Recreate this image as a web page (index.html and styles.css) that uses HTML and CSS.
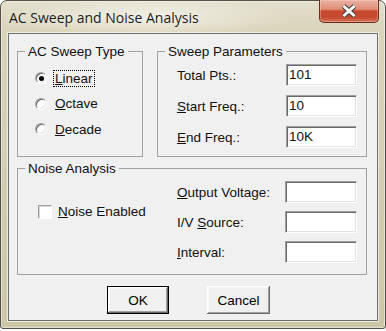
FILE: index.html
```html
<!DOCTYPE html>
<html lang="en">
<head>
	<meta charset="utf-8">
	<title>AC Sweep and Noise Analysis</title>
	<link rel="stylesheet" href="styles.css">
</head>
<body>

	<div class="window">

		<div class="titlebar">
			<span class="title">AC Sweep and Noise Analysis</span>
			<button class="close-btn" type="button">
				<svg width="16" height="14" viewBox="0 0 16 14">
					<path d="M2.5 2 L13.5 12 M13.5 2 L2.5 12" stroke="#3a3a3a" stroke-width="5" />
					<path d="M2.5 2 L13.5 12 M13.5 2 L2.5 12" stroke="#fff" stroke-width="3" />
				</svg>
			</button>
		</div>

		<form class="client" action="" onsubmit="return false">

			<div class="top-row">

				<fieldset class="group sweep-type">
					<legend>AC Sweep Type</legend>
					<div class="group-body radio-list">
						<label class="radio-row"><span class="radio checked"></span><span class="caption focused"><u>L</u>inear</span></label>
						<label class="radio-row"><span class="radio"></span><span class="caption"><u>O</u>ctave</span></label>
						<label class="radio-row"><span class="radio"></span><span class="caption"><u>D</u>ecade</span></label>
					</div>
				</fieldset>

				<fieldset class="group sweep-params">
					<legend>Sweep Parameters</legend>
					<div class="group-body field-list">
						<div class="field-row"><span>Total Pts.:</span><span class="textbox">101</span></div>
						<div class="field-row"><span><u>S</u>tart Freq.:</span><span class="textbox">10</span></div>
						<div class="field-row"><span><u>E</u>nd Freq.:</span><span class="textbox">10K</span></div>
					</div>
				</fieldset>

			</div>

			<fieldset class="group noise">
				<legend>Noise Analysis</legend>
				<div class="group-body noise-body">
					<label class="check-row"><span class="checkbox"></span><span><u>N</u>oise Enabled</span></label>
					<div class="field-list noise-fields">
						<div class="field-row"><span><u>O</u>utput Voltage:</span><span class="textbox wide"></span></div>
						<div class="field-row"><span>I/V <u>S</u>ource:</span><span class="textbox wide"></span></div>
						<div class="field-row"><span><u>I</u>nterval:</span><span class="textbox wide"></span></div>
					</div>
				</div>
			</fieldset>

			<div class="buttons">
				<button class="btn default" type="submit">OK</button>
				<button class="btn cancel" type="button">Cancel</button>
			</div>

		</form>

	</div>

</body>
</html>
```

FILE: styles.css
```css
html,body {
	margin:0;
	padding:0;
	}
body {
	background-color:#fff;
	font-family:"Liberation Sans",Arial,sans-serif;
	font-size:13.5px;
	color:#111;
	}
u {
	text-decoration-thickness:1px;
	text-underline-offset:1px;
	}

/* window frame */
.window {
	box-sizing:border-box;
	width:386px;
	height:329px;
	display:flex;
	flex-direction:column;
	border:1px solid #545048;
	border-radius:7px 7px 3px 3px;
	background:
		radial-gradient(ellipse 140px 22px at 150px 16px,rgba(255,255,255,0.55),rgba(255,255,255,0)),
		linear-gradient(to bottom,#e2dfcc 0,#d9d4ba 30px,#cdc7a8 100%);
	box-shadow:inset 0 0 0 1px rgba(255,255,255,0.45);
	}

.titlebar {
	height:32px;
	display:flex;
	justify-content:space-between;
	align-items:flex-start;
	}
.title {
	padding:7px 0 0 8px;
	font-family:"Open Sans","Noto Sans",sans-serif;
	font-size:14px;
	color:#1c1c1c;
	text-shadow:0 0 8px rgba(255,255,255,0.9);
	}
.close-btn {
	box-sizing:border-box;
	width:60px;
	height:23px;
	margin:-1px 6px 0 0;
	padding:0;
	display:flex;
	align-items:center;
	justify-content:center;
	border:1px solid #6e2a1d;
	border-top:none;
	border-radius:0 0 5px 5px;
	background:linear-gradient(to bottom,#eab1a3 0,#de8d77 42%,#c9482d 50%,#c44b30 78%,#d77458 100%);
	box-shadow:inset 0 0 0 1px rgba(255,220,210,0.35);
	}

/* client area */
.client {
	box-sizing:border-box;
	width:370px;
	height:288px;
	margin:0 7px;
	padding:10px 9px 0 8px;
	border:1px solid #6f6f6f;
	background-color:#f0f0f0;
	box-shadow:0 0 0 1px rgba(255,255,255,0.6);
	}

.top-row {
	display:flex;
	}

.group {
	box-sizing:border-box;
	margin:0;
	padding:0;
	border:1px solid #a0a0a0;
	min-width:0;
	}
.group legend {
	margin-left:7px;
	padding:0 3px;
	line-height:15px;
	}

.sweep-type {
	width:126px;
	height:113px;
	}
.sweep-params {
	width:210px;
	height:113px;
	margin-left:14px;
	}
.noise {
	width:350px;
	height:114px;
	margin-top:4px;
	}

/* radio buttons */
.radio-list {
	display:flex;
	flex-direction:column;
	gap:7.5px;
	padding:10px 0 0 17px;
	}
.radio-row {
	height:18px;
	display:flex;
	align-items:center;
	}
.radio {
	position:relative;
	box-sizing:border-box;
	width:12px;
	height:12px;
	margin-right:6px;
	border-radius:50%;
	border:1px solid;
	border-color:#a0a0a0 #fff #fff #a0a0a0;
	background-color:#fff;
	box-shadow:inset 1px 1px 0 #696969,inset -1px -1px 0 #e3e3e3;
	}
.radio.checked::after {
	content:"";
	position:absolute;
	left:2.5px;
	top:2.5px;
	width:5px;
	height:5px;
	border-radius:50%;
	background-color:#000;
	}
.caption {
	padding:0 1px;
	border:1px solid transparent;
	line-height:15px;
	}
.caption.focused {
	border:1px dotted #000;
	}

/* text fields */
.field-list {
	display:flex;
	flex-direction:column;
	}
.sweep-params .field-list {
	gap:9px;
	padding:5px 9px 0 19px;
	}
.field-row {
	height:22px;
	display:flex;
	align-items:center;
	justify-content:space-between;
	}
.textbox {
	box-sizing:border-box;
	width:71px;
	height:22px;
	padding-left:2px;
	line-height:20px;
	border:1px solid;
	border-color:#a0a0a0 #fff #fff #a0a0a0;
	background-color:#fff;
	box-shadow:inset 1px 1px 0 #696969,inset -1px -1px 0 #e3e3e3;
	}
.textbox.wide {
	width:72px;
	}

/* noise section */
.noise-body {
	display:flex;
	padding:5px 9px 0 20px;
	}
.check-row {
	width:139px;
	height:15px;
	margin-top:23px;
	display:flex;
	align-items:center;
	}
.checkbox {
	box-sizing:border-box;
	width:14px;
	height:14px;
	margin-right:6px;
	border:1px solid;
	border-color:#a0a0a0 #fff #fff #a0a0a0;
	background-color:#fff;
	box-shadow:inset 1px 1px 0 #d6d6d6;
	}
.noise-fields {
	flex:1;
	gap:8px;
	}

/* buttons */
.buttons {
	display:flex;
	margin:11px 0 0 90px;
	}
.btn {
	box-sizing:border-box;
	width:63px;
	height:28px;
	padding:0;
	font-family:inherit;
	font-size:inherit;
	color:#000;
	background-color:#f0f0f0;
	border:none;
	box-shadow:inset -1px -1px 0 #696969,inset 1px 1px 0 #fff,inset -2px -2px 0 #a0a0a0,inset 2px 2px 0 #f8f8f8;
	}
.btn.default {
	width:62px;
	border:1px solid #000;
	}
.btn.cancel {
	margin-left:38px;
	}
```
